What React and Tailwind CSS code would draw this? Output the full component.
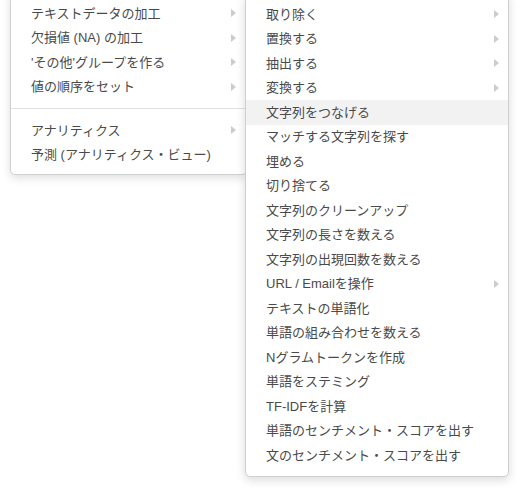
import React from 'react';

const leftGroups = [
  [
    { label: 'テキストデータの加工', sub: true },
    { label: '欠損値 (NA) の加工', sub: true },
    { label: "'その他'グループを作る", sub: true },
    { label: '値の順序をセット', sub: true },
  ],
  [
    { label: 'アナリティクス', sub: true },
    { label: '予測 (アナリティクス・ビュー)' },
  ],
];

const rightItems = [
  { label: '取り除く', sub: true },
  { label: '置換する', sub: true },
  { label: '抽出する', sub: true },
  { label: '変換する', sub: true },
  { label: '文字列をつなげる', active: true },
  { label: 'マッチする文字列を探す' },
  { label: '埋める' },
  { label: '切り捨てる' },
  { label: '文字列のクリーンアップ' },
  { label: '文字列の長さを数える' },
  { label: '文字列の出現回数を数える' },
  { label: 'URL / Emailを操作', sub: true },
  { label: 'テキストの単語化' },
  { label: '単語の組み合わせを数える' },
  { label: 'Nグラムトークンを作成' },
  { label: '単語をステミング' },
  { label: 'TF-IDFを計算' },
  { label: '単語のセンチメント・スコアを出す' },
  { label: '文のセンチメント・スコアを出す' },
];

const Arrow = () => (
  <span className="w-0 h-0 border-y-[4.5px] border-y-transparent border-l-[5px] border-l-[#cccccc]" />
);

const Row = ({ item, padLeft, padRight }) => (
  <div
    className={`flex items-center justify-between h-[24.5px] ${padLeft} ${padRight} ${
      item.active ? 'bg-[#f2f2f2]' : ''
    }`}
  >
    <span className="whitespace-nowrap">{item.label}</span>
    {item.sub && <Arrow />}
  </div>
);

export default function App() {
  return (
    <div
      className="w-[530px] h-[493px] bg-white overflow-hidden text-[13px] text-[#4a4a4a]"
      style={{ fontFamily: '"Liberation Sans", "Noto Sans CJK JP", sans-serif' }}
    >
      <div className="flex items-start">
        <div className="ml-[10px] mt-[-8px] w-[237px] bg-white border border-[#d0d0d0] rounded-[5px] shadow-[0_3px_10px_rgba(0,0,0,0.13)] pt-[8px] pb-[7px]">
          {leftGroups.map((group, gi) => (
            <div key={gi}>
              {gi > 0 && <div className="my-[9px] h-px bg-[#e2e2e2]" />}
              {group.map((item) => (
                <Row key={item.label} item={item} padLeft="pl-[20px]" padRight="pr-[10px]" />
              ))}
            </div>
          ))}
        </div>
        <div className="relative ml-[-2px] mt-[-7px] w-[264px] bg-white border border-[#cfcfcf] rounded-[5px] shadow-[0_3px_10px_rgba(0,0,0,0.15)] pt-[8px] pb-[8px]">
          {rightItems.map((item) => (
            <Row key={item.label} item={item} padLeft="pl-[20px]" padRight="pr-[9px]" />
          ))}
        </div>
      </div>
    </div>
  );
}
